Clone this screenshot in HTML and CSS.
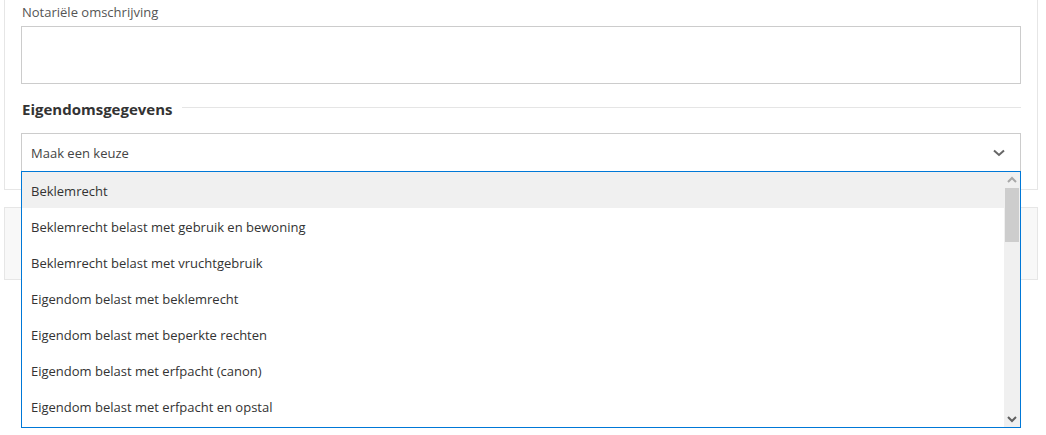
FILE: index.html
```html
<!DOCTYPE html>
<html lang="nl">
<head>
<meta charset="utf-8">
<title>Eigendomsgegevens</title>
<link rel="stylesheet" href="styles.css">
</head>
<body>
<div class="page">
  <section class="card">
    <label class="label">Notariële omschrijving</label>
    <div class="textarea"></div>
    <div class="section-head">
      <h3 class="section-title">Eigendomsgegevens</h3>
      <span class="section-line"></span>
    </div>
    <div class="select-wrap">
      <div class="select">
        <span class="select-text">Maak een keuze</span>
        <svg class="chevron" width="12" height="8" viewBox="0 0 12 8"><polyline points="1,1.5 6,6 11,1.5" fill="none" stroke="#666" stroke-width="2"/></svg>
      </div>
      <div class="listbox">
        <ul class="options">
          <li class="option active">Beklemrecht</li>
          <li class="option">Beklemrecht belast met gebruik en bewoning</li>
          <li class="option">Beklemrecht belast met vruchtgebruik</li>
          <li class="option">Eigendom belast met beklemrecht</li>
          <li class="option">Eigendom belast met beperkte rechten</li>
          <li class="option">Eigendom belast met erfpacht (canon)</li>
          <li class="option">Eigendom belast met erfpacht en opstal</li>
        </ul>
        <div class="scrollbar">
          <svg class="sb-arrow" width="16" height="16" viewBox="0 0 16 16"><polyline points="4,10 8,6 12,10" fill="none" stroke="#a8a8a8" stroke-width="2"/></svg>
          <div class="sb-thumb"></div>
          <div class="sb-track"></div>
          <svg class="sb-arrow" width="16" height="16" viewBox="0 0 16 16"><polyline points="4,6 8,10 12,6" fill="none" stroke="#606060" stroke-width="2"/></svg>
        </div>
      </div>
    </div>
  </section>
  <section class="card card-muted"></section>
</div>
</body>
</html>
```
FILE: styles.css
```css
html, body {
  margin: 0;
  padding: 0;
  background: #fff;
}
body {
  font-family: "Open Sans", "Noto Sans", sans-serif;
  font-size: 13px;
  color: #333;
}
.page {
  margin: 0 8px 0 4px;
  min-height: 435px;
}
.card {
  border: 1px solid #e6e6e6;
  border-top: none;
  padding: 3px 16px 16px 16px;
  background: #fff;
}
.card-muted {
  margin-top: 17px;
  border-top: 1px solid #e6e6e6;
  height: 71px;
  padding: 0;
  background: #f8f8f8;
}
.label {
  display: block;
  line-height: 18px;
  margin: 0 0 5px 1px;
  color: #555;
}
.textarea {
  height: 56px;
  border: 1px solid #ccc;
  background: #fff;
}
.section-head {
  display: flex;
  align-items: center;
  gap: 9px;
  margin-top: 14px;
  margin-bottom: 13px;
}
.section-title {
  margin: 0 0 0 1px;
  font-size: 15px;
  line-height: 22px;
  font-weight: 700;
  color: #333;
}
.section-line {
  flex: 1;
  height: 1px;
  background: #e5e5e5;
  margin-top: -4px;
}
.select-wrap {
  position: relative;
}
.select {
  height: 38px;
  border: 1px solid #ccc;
  display: flex;
  align-items: center;
  justify-content: space-between;
  padding: 0 15px 0 9px;
  background: #fff;
}
.select-text {
  color: #444;
}
.chevron {
  display: block;
}
.listbox {
  position: absolute;
  left: 0;
  right: 0;
  top: 38px;
  height: 255px;
  border: 1px solid #0078d7;
  background: #fff;
  display: flex;
  overflow: hidden;
  z-index: 2;
}
.options {
  list-style: none;
  margin: 0;
  padding: 0;
  flex: 1;
  overflow: hidden;
}
.option {
  box-sizing: border-box;
  height: 36px;
  padding-top: 3px;
  line-height: 33px;
  padding-left: 9px;
  color: #333;
  white-space: nowrap;
}
.option.active {
  background: #f0f0f0;
}
.scrollbar {
  width: 16px;
  background: #f0f0f0;
  display: flex;
  flex-direction: column;
}
.sb-arrow {
  display: block;
  flex: none;
}
.sb-thumb {
  height: 54px;
  margin: 0 1px;
  background: #cdcdcd;
}
.sb-track {
  flex: 1;
}
```
